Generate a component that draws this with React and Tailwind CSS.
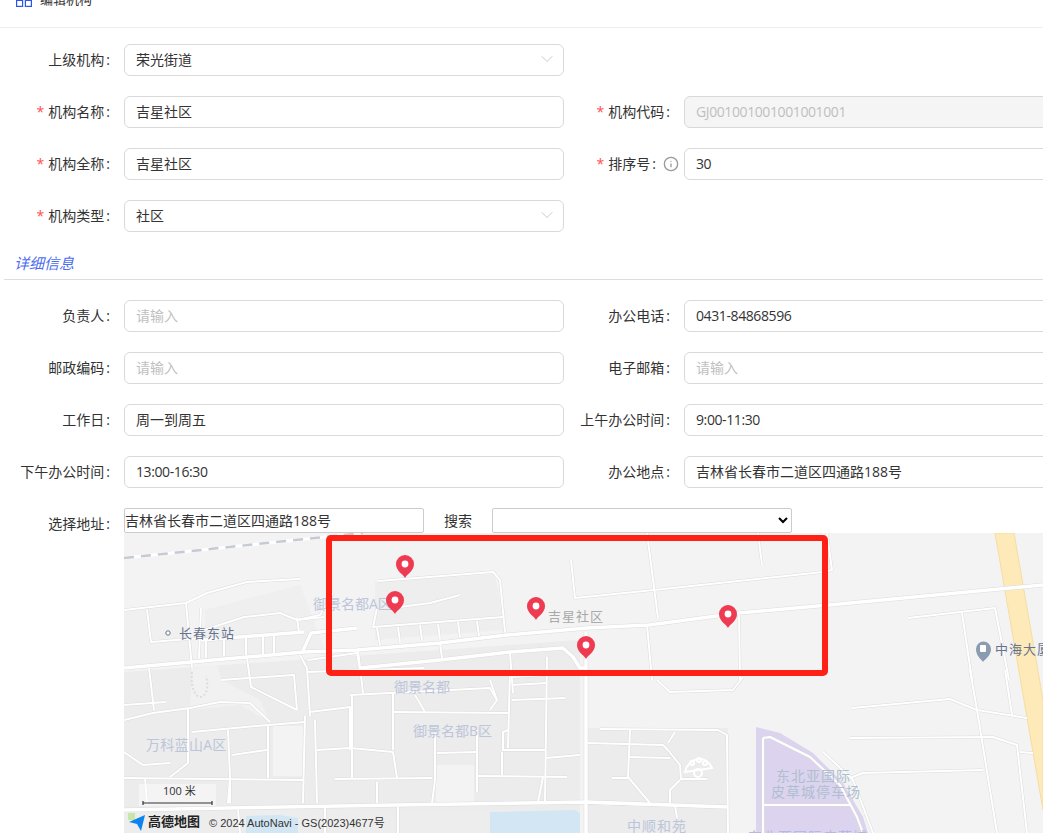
import { ChevronDown, Info } from 'lucide-react'

const FONT = '"Open Sans", "Noto Sans CJK SC", sans-serif'

// all map coordinates are page pixels, the svg viewBox starts at the map's corner
const roads = [
  '124,610 186,603 207,593 247,582 300,579',
  '186,603 192,668',
  '147,610 151,642 201,638',
  '201,608 199,658',
  '204,630 244,617 280,613 297,620 324,617',
  '297,618 299,632',
  '297,620 320,615 333,593',
  '378,581 493,572 500,580 505,632',
  '400,607 430,603 460,595',
  '377,608 373,627 503,617',
  '377,628 380,645', '398,627 400,642', '420,625 422,640', '438,624 440,639', '458,622 460,637', '477,621 479,636',
  '206,640 206,658', '224,639 224,656', '246,637 246,655', '263,636 263,654', '274,635 274,653',
  '300,655 307,668 310,716',
  '308,660 357,653 360,670',
  '358,650 363,693',
  '440,643 442,658', '510,653 513,693',
  '307,672 424,668',
  '221,680 294,675 297,710',
  '247,658 251,687 297,710',
  '149,668 154,710',
  '571,560 575,598 654,590 823,572 832,570 827,533',
  '647,533 658,618', '758,533 762,565',
  '739,615 740,680', '647,625 652,680',
  '908,618 995,608 1009,680', '962,613 972,680',
  '970,670 977,710 997,833', '1005,670 1012,715',
  '852,708 950,699 977,710 1027,718',
  '850,738 993,737 1017,745 1027,833',
  '850,778 863,773 983,770', '1020,752 1033,753',
  '600,729 718,730 727,735 728,833',
  '588,743 663,745 668,750 680,765 681,780',
  '630,730 628,777 650,803', '628,757 670,758', '675,732 668,743',
  '680,780 670,790 670,803', '612,778 628,778', '681,779 707,779',
  '588,803 727,807', '675,805 677,818',
  '657,680 670,692 733,690 743,677',
  '124,705 166,702',
  '124,720 153,713 190,708 220,702 250,703 270,722',
  '188,708 188,763 170,777', '124,752 143,765 170,763',
  '124,778 303,780', '145,778 147,805',
  '228,730 230,777 228,803', '192,732 268,725 305,722',
  '232,755 267,750', '268,725 268,778', '305,716 303,803', '315,720 317,803',
  '310,712 350,707 350,750',
  '350,695 490,688 497,700 490,710', '352,695 352,778', '393,693 393,750',
  '393,712 508,713', '547,657 545,803', '510,670 508,748',
  '512,677 547,675', '512,685 547,683', '512,700 565,698',
  '317,750 350,748 393,752', '393,752 397,778',
  '335,779 432,778', '435,733 435,780 432,803', '437,753 477,752',
  '477,730 477,792', '477,776 567,777',
  '503,750 503,732 508,730', '502,750 545,750', '502,752 502,775',
  '545,758 580,755', '543,777 538,802', '377,782 377,803', '230,780 230,803',
  '415,695 425,712', '490,680 497,700',
  '238,810 240,833', '398,807 398,833', '325,808 325,833',
  '763,738 770,737 810,757 840,785 857,817 863,833',
  '763,738 763,833', '763,805 850,805',
  '823,752 853,780 873,833',
]

const mainRoads = [
  '124,668 191,662 247,657 304,652 357,650 440,643 507,635 587,628 649,625 739,613 829,605 1043,585',
  '201,640 304,632',
  '302,653 311,633 357,628',
  '360,668 440,660 510,652 563,648 573,657 580,668 587,668',
  '124,810 397,805 587,802 728,807',
  '586,632 586,833',
]

const pins = [
  [405, 564],
  [395, 600],
  [536, 606],
  [586, 645],
  [728, 614],
]

const labels = [
  { x: 313, y: 609, text: '御景名都A区', size: 14, fill: '#bcc5da' },
  { x: 179, y: 638, text: '长春东站', size: 13, fill: '#66738f', spacing: 1 },
  { x: 548, y: 621, text: '吉星社区', size: 13, fill: '#a9a9a9', spacing: 1 },
  { x: 995, y: 654, text: '中海大厦', size: 13, fill: '#66738f', spacing: 1 },
  { x: 394, y: 692, text: '御景名都', size: 14, fill: '#bcc5da' },
  { x: 413, y: 736, text: '御景名都B区', size: 14, fill: '#bcc5da' },
  { x: 146, y: 750, text: '万科蓝山A区', size: 14, fill: '#bcc5da', spacing: 0.3 },
  { x: 776, y: 781, text: '东北亚国际', size: 14, fill: '#aebfd0', spacing: 1 },
  { x: 771, y: 797, text: '皮草城停车场', size: 14, fill: '#aebfd0', spacing: 1 },
  { x: 627, y: 831, text: '中顺和苑', size: 14, fill: '#bcc5da', spacing: 1 },
  { x: 748, y: 842, text: '东北亚国际皮草城', size: 14, fill: '#b4b8e2', spacing: 1 },
]

function Pin({ x, y }) {
  return (
    <g>
      <path d={`M${x} ${y + 14} C${x - 2} ${y + 10} ${x - 9} ${y + 7} ${x - 9} ${y} A9 9 0 1 1 ${x + 9} ${y} C${x + 9} ${y + 7} ${x + 2} ${y + 10} ${x} ${y + 14} Z`} fill="#ee3b52" />
      <circle cx={x} cy={y} r="3.4" fill="#fff" />
    </g>
  )
}

function MapDrawing() {
  return (
    <svg className="block w-[919px] h-[300px]" viewBox="124 533 919 300" style={{ fontFamily: FONT }}>
      <rect x="124" y="533" width="919" height="300" fill="#f3f3f3" />
      {/* built up blocks */}
      <polygon points="124,672 580,640 580,810 124,810" fill="#ececec" />
      <polygon points="124,612 185,604 193,662 124,668" fill="#f0f0f0" />
      <polygon points="205,610 300,585 325,650 205,660" fill="#efefef" />
      <polygon points="375,582 495,574 505,630 375,640" fill="#eeeeee" />
      <polygon points="192,668 217,665 222,680 260,700 270,722 240,705 190,710" fill="#f1f1f1" />
      <rect x="273" y="726" width="30" height="50" fill="#f3f3f3" />
      <rect x="436" y="765" width="38" height="38" fill="#f3f3f3" />
      <rect x="588" y="728" width="140" height="105" fill="#ececec" />
      <rect x="124" y="810" width="456" height="23" fill="#ededed" />
      <polygon points="246,816 280,815 298,818 298,833 246,833" fill="#d2e6f3" />
      <polygon points="490,812 575,810 580,813 580,833 490,833" fill="#d2e6f3" />
      <polygon points="756,727 780,733 813,753 843,783 863,817 868,833 756,833" fill="#dcd3ee" />
      <polygon points="995,533 1014,533 1043,700 1043,810" fill="#fdeab8" stroke="#f6dda0" strokeWidth="1" />

      {/* railway */}
      <polyline points="124,558 363,533" fill="none" stroke="#fff" strokeWidth="3" />
      <polyline points="124,558 363,533" fill="none" stroke="#c5cad3" strokeWidth="2.5" strokeDasharray="10 7" />

      {/* footpath */}
      <path d="M192 672 C190 690 197 700 203 696 C208 692 208 684 206 676" fill="none" stroke="#dddddd" strokeWidth="2" strokeDasharray="2 2" />

      {roads.map((p, i) => (
        <polyline key={i} points={p} fill="none" stroke="#dcdcdc" strokeWidth="3" strokeLinejoin="round" />
      ))}
      {mainRoads.map((p, i) => (
        <polyline key={i} points={p} fill="none" stroke="#dcdcdc" strokeWidth="4.5" strokeLinejoin="round" />
      ))}
      {roads.map((p, i) => (
        <polyline key={i} points={p} fill="none" stroke="#fff" strokeWidth="2" strokeLinejoin="round" />
      ))}
      {mainRoads.map((p, i) => (
        <polyline key={i} points={p} fill="none" stroke="#fff" strokeWidth="3.5" strokeLinejoin="round" />
      ))}

      {/* flower shaped roundabout */}
      <g fill="none" stroke="#fff" strokeWidth="2">
        <path d="M685 772 C688 758 705 753 712 768 Z" />
        <circle cx="698" cy="773" r="4" />
        <circle cx="692" cy="763" r="2" />
        <circle cx="699" cy="760" r="2" />
        <circle cx="705" cy="763" r="2" />
      </g>

      <circle cx="168" cy="633" r="2.2" fill="#fff" stroke="#66738f" strokeWidth="1" />
      <path d="M983 662 C981 659 976 656 976 649 A7.5 7.5 0 1 1 991 649 C991 656 985 659 983 662 Z" fill="#8b9bb0" />
      <rect x="980" y="645" width="6" height="7" rx="1" fill="#fff" />

      {labels.map((l) => (
        <text key={l.text} x={l.x} y={l.y} fontSize={l.size} fill={l.fill} letterSpacing={l.spacing || 0}>
          {l.text}
        </text>
      ))}

      {pins.map(([x, y]) => (
        <Pin key={x} x={x} y={y} />
      ))}

      {/* scale bar */}
      <rect x="139" y="784" width="77" height="22" fill="#fff" fillOpacity="0.45" />
      <text x="163" y="795" fontSize="11" fill="#333">100 米</text>
      <path d="M143 801 V805 M143 803 H212 M212 801 V805" fill="none" stroke="#333" strokeWidth="1.2" />

      {/* logo */}
      <rect x="128" y="813" width="7" height="7" fill="#c5e8a8" />
      <path d="M129 822 L145 815 L141 831 L137 824 Z" fill="#0d83ef" />
      <text x="148" y="826" fontSize="13" fontWeight="700" fill="#222">高德地图</text>
      <text x="209" y="827" fontSize="11" fill="#333" style={{ fontFamily: '"Liberation Sans", "Noto Sans CJK SC", sans-serif' }}>© 2024 AutoNavi - GS(2023)4677号</text>
    </svg>
  )
}

function Label({ text, required, info }) {
  return (
    <label className="w-[110px] mr-[14px] pb-[2px] shrink-0 flex items-center justify-end whitespace-nowrap text-[14px] text-[#333]">
      {required && <span className="mr-[4px] text-[#ff4d4f]">*</span>}
      <span>{text}</span>
      <span className="ml-[2px]">:</span>
      {info && <Info className="ml-[7px] -mr-[9px] mt-[2px] w-4 h-4 text-[#999]" strokeWidth={2} />}
    </label>
  )
}

function Field({ label, required, info, value, placeholder, disabled, select, tight }) {
  return (
    <div className="flex h-8 w-[560px]">
      <Label text={label} required={required} info={info} />
      <div className="relative w-[440px] h-8 shrink-0">
        <input
          readOnly
          disabled={disabled}
          defaultValue={value}
          placeholder={placeholder}
          className={`w-full h-full rounded-md border border-[#d9d9d9] px-[11px] pb-[2px] text-[14px] outline-none placeholder:text-[#bfbfbf] ${tight ? 'tracking-[-0.4px]' : ''} ${disabled ? 'bg-[#f5f5f5] text-[#bfbfbf]' : 'bg-white text-[#333]'}`}
        />
        {select && <ChevronDown className="absolute right-[7px] top-[5px] w-5 h-5 text-[#bfbfbf]" strokeWidth={1} />}
      </div>
    </div>
  )
}

export default function App() {
  return (
    <main className="h-[833px] overflow-hidden bg-white" style={{ fontFamily: FONT }}>
      <div className="h-[28px] border-b border-[#eeeeee] flex items-start pl-4">
        <svg className="w-4 h-4 -mt-[9px] shrink-0" viewBox="0 0 16 16" fill="none" stroke="#2f54eb" strokeWidth="1.2">
          <rect x="0.6" y="0.6" width="6" height="6" />
          <rect x="9.4" y="0.6" width="6" height="6" />
          <rect x="0.6" y="9.4" width="6" height="6" />
          <rect x="9.4" y="9.4" width="6" height="6" />
        </svg>
        <span className="ml-2 -mt-[9px] text-[13px] leading-4 text-[#333]">编辑机构</span>
      </div>

      <div className="grid grid-cols-[560px_560px] gap-y-5 pt-4">
        <Field label="上级机构" value="荣光街道" select />
        <div />
        <Field label="机构名称" required value="吉星社区" />
        <Field label="机构代码" required value="GJ001001001001001001" disabled tight />
        <Field label="机构全称" required value="吉星社区" />
        <Field label="排序号" required info value="30" tight />
        <Field label="机构类型" required value="社区" select />
      </div>

      <div className="ml-1 mt-[21px] h-[27px] border-b border-[#dddddd] pl-[10px] text-[15px] leading-5 italic text-[#4a6cf0]">详细信息</div>

      <div className="grid grid-cols-[560px_560px] gap-y-5 pt-5">
        <Field label="负责人" placeholder="请输入" />
        <Field label="办公电话" value="0431-84868596" tight />
        <Field label="邮政编码" placeholder="请输入" />
        <Field label="电子邮箱" placeholder="请输入" />
        <Field label="工作日" value="周一到周五" />
        <Field label="上午办公时间" value="9:00-11:30" tight />
        <Field label="下午办公时间" value="13:00-16:30" tight />
        <Field label="办公地点" value="吉林省长春市二道区四通路188号" />
      </div>

      <div className="flex mt-5 h-[25px]">
        <label className="w-[110px] mr-[14px] pt-[6px] flex justify-end text-[14px] leading-5 text-[#333]">
          <span>选择地址</span>
          <span className="ml-[2px]">:</span>
        </label>
        <input readOnly defaultValue="吉林省长春市二道区四通路188号" className="w-[300px] h-[25px] pb-[2px] rounded-[2px] border border-[#cccccc] text-[14px] text-[#333] outline-none" />
        <span className="ml-5 w-[48px] text-[14px] leading-[25px] text-[#333]">搜索</span>
        <select className="w-[300px] h-[25px] rounded-[2px] border border-[#cccccc] bg-white text-[14px]" />
      </div>

      <div className="relative ml-[124px] w-[919px] h-[300px] overflow-hidden">
        <MapDrawing />
        <div className="absolute left-[202px] top-[2px] w-[502px] h-[141px] border-[6px] border-[#ff2115] rounded-[5px]" />
      </div>
    </main>
  )
}
